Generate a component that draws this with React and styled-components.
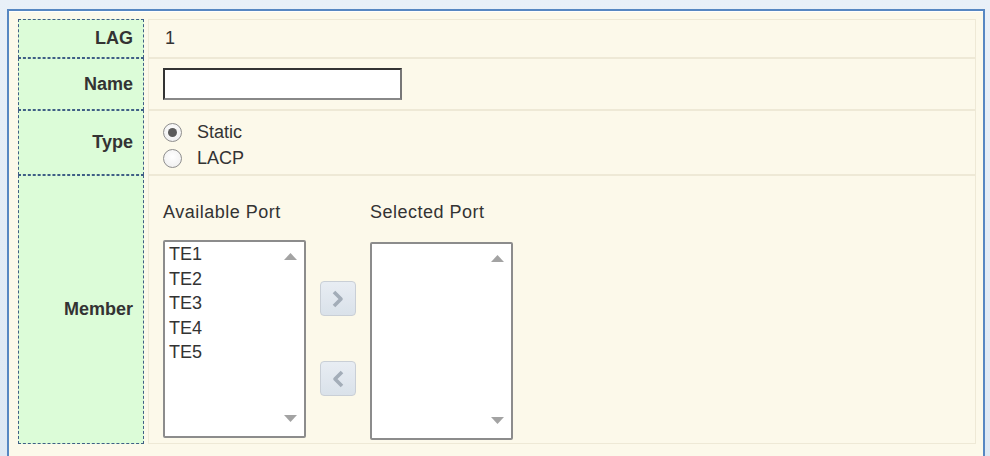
import React, { useState } from "react";
import styled, { createGlobalStyle } from "styled-components";

const GlobalStyle = createGlobalStyle`
  html, body {
    margin: 0;
    padding: 0;
    background: linear-gradient(#e9f0f8, #dde8f4);
    font-family: "Liberation Sans", Arial, sans-serif;
    color: #333;
    overflow: hidden;
  }
`;

const Frame = styled.div`
  margin: 9px 5px 0 7px;
  height: 460px;
  border: 2px solid #5787c2;
  border-bottom: none;
  background: #fcf9ea;
  box-shadow: inset 0 1px 0 #fff;
  padding: 8px 7px 0 9px;
  box-sizing: border-box;
`;

const Table = styled.div`
  display: flex;
  flex-direction: column;
`;

const Row = styled.div`
  display: flex;
  gap: 4px;
  height: ${(p) => p.$h}px;
`;

const Label = styled.div`
  width: 126px;
  flex: none;
  box-sizing: border-box;
  border: 1px dashed #3f5f86;
  background: #dcfcd8;
  display: flex;
  align-items: center;
  justify-content: flex-end;
  padding-right: 10px;
  font-size: 18px;
  font-weight: bold;
  color: #333;
`;

const Value = styled.div`
  flex: 1;
  box-sizing: border-box;
  border: 1px solid #eee9d6;
  display: flex;
  align-items: ${(p) => (p.$top ? "flex-start" : "center")};
  padding-left: ${(p) => p.$pl || 14}px;
  padding-top: ${(p) => p.$pt || 0}px;
  font-size: 18px;
`;

const TextInput = styled.input`
  width: 239px;
  height: 32px;
  box-sizing: border-box;
  border: 2px solid #555;
  border-top-color: #333;
  border-left-color: #333;
  border-right-color: #777;
  border-bottom-color: #888;
  background: #fff;
  outline: none;
  font: inherit;
  padding: 0 4px;
`;

const RadioGroup = styled.div`
  display: flex;
  flex-direction: column;
`;

const RadioRow = styled.label`
  display: flex;
  align-items: center;
  height: 26px;
  gap: 15px;
  cursor: pointer;
`;

const Circle = styled.span`
  width: 19px;
  height: 19px;
  box-sizing: border-box;
  border-radius: 50%;
  border: 1px solid #8e8e8e;
  background: radial-gradient(circle at 50% 40%, #fff, #ececec);
  display: flex;
  align-items: center;
  justify-content: center;

  &::after {
    content: "";
    width: 9px;
    height: 9px;
    border-radius: 50%;
    background: ${(p) => (p.$on ? "#5b5b5b" : "transparent")};
  }
`;

const Member = styled.div`
  display: flex;
  align-items: flex-start;
`;

const PortCol = styled.div`
  display: flex;
  flex-direction: column;
  gap: 16px;
`;

const Caption = styled.div`
  height: 24px;
  line-height: 24px;
  font-size: 18px;
  letter-spacing: 0.5px;
  color: #333;
`;

const ListBox = styled.div`
  position: relative;
  width: 143px;
  height: 198px;
  box-sizing: border-box;
  border: 2px solid #8c8c8c;
  border-radius: 2px;
  background: #fff;
  padding: 0 0 0 4px;
  margin-top: ${(p) => p.$mt || 0}px;
`;

const Item = styled.div`
  font-size: 18px;
  line-height: 24.5px;
  color: #333;
`;

const Arrow = styled.svg`
  position: absolute;
  right: 7px;
  ${(p) => (p.$down ? "bottom: 14px;" : "top: 11px;")}
`;

const Shuttle = styled.div`
  width: 64px;
  padding-top: 81px;
  display: flex;
  flex-direction: column;
  align-items: center;
  gap: 45px;
`;

const MoveBtn = styled.button`
  width: 36px;
  height: 35px;
  padding: 0;
  border: 1px solid #c9cfd6;
  border-radius: 4px;
  background: linear-gradient(#e8edf3, #dae2ea);
  display: flex;
  align-items: center;
  justify-content: center;
  cursor: default;
`;

function ScrollArrows() {
  return (
    <>
      <Arrow width="13" height="7" viewBox="0 0 13 7">
        <path d="M0 7 L6.5 0 L13 7 Z" fill="#a3a3a3" />
      </Arrow>
      <Arrow $down width="13" height="7" viewBox="0 0 13 7">
        <path d="M0 0 L6.5 7 L13 0 Z" fill="#a3a3a3" />
      </Arrow>
    </>
  );
}

function Chevron({ left }) {
  return (
    <svg width="14" height="18" viewBox="0 0 14 18">
      <path
        d={left ? "M11 2 L4 9 L11 16" : "M3 2 L10 9 L3 16"}
        fill="none"
        stroke="#a3adb8"
        strokeWidth="3.6"
        strokeLinejoin="round"
      />
    </svg>
  );
}

export default function App() {
  const [type, setType] = useState("static");
  const ports = ["TE1", "TE2", "TE3", "TE4", "TE5"];

  return (
    <>
      <GlobalStyle />
      <Frame>
        <Table>
          <Row $h={39}>
            <Label>LAG</Label>
            <Value $pl={16}>1</Value>
          </Row>
          <Row $h={52}>
            <Label>Name</Label>
            <Value>
              <TextInput type="text" />
            </Value>
          </Row>
          <Row $h={65}>
            <Label>Type</Label>
            <Value $top $pt={8}>
              <RadioGroup>
                <RadioRow onClick={() => setType("static")}>
                  <Circle $on={type === "static"} />
                  Static
                </RadioRow>
                <RadioRow onClick={() => setType("lacp")}>
                  <Circle $on={type === "lacp"} />
                  LACP
                </RadioRow>
              </RadioGroup>
            </Value>
          </Row>
          <Row $h={269}>
            <Label>Member</Label>
            <Value $top $pt={24}>
              <Member>
                <PortCol>
                  <Caption>Available Port</Caption>
                  <ListBox>
                    {ports.map((p) => (
                      <Item key={p}>{p}</Item>
                    ))}
                    <ScrollArrows />
                  </ListBox>
                </PortCol>
                <Shuttle>
                  <MoveBtn>
                    <Chevron />
                  </MoveBtn>
                  <MoveBtn>
                    <Chevron left />
                  </MoveBtn>
                </Shuttle>
                <PortCol>
                  <Caption>Selected Port</Caption>
                  <ListBox $mt={2}>
                    <ScrollArrows />
                  </ListBox>
                </PortCol>
              </Member>
            </Value>
          </Row>
        </Table>
      </Frame>
    </>
  );
}
